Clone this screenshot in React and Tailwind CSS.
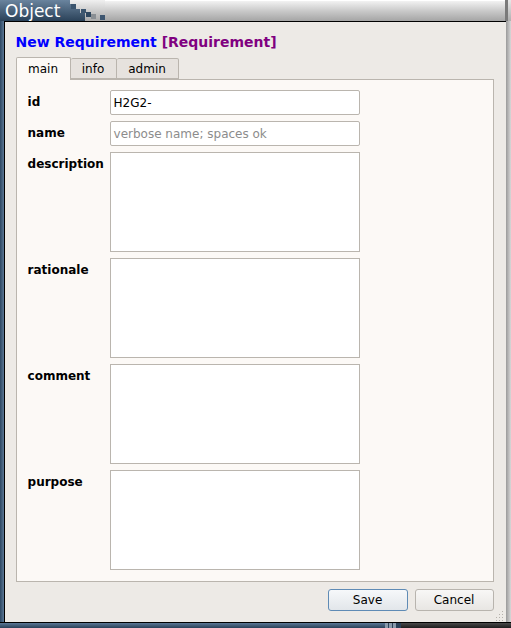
import React from "react";

const fields = [
  { key: "id", label: "id", value: "H2G2-", tall: false },
  { key: "name", label: "name", placeholder: "verbose name; spaces ok", tall: false },
  { key: "description", label: "description", tall: true },
  { key: "rationale", label: "rationale", tall: true },
  { key: "comment", label: "comment", tall: true },
  { key: "purpose", label: "purpose", tall: true },
];

const TitleSteps = () => (
  <svg width="40" height="21" viewBox="0 0 40 21" className="shrink-0">
    <defs>
      <linearGradient id="blu" x1="0" y1="0" x2="0" y2="1">
        <stop offset="0" stopColor="#6a849e" />
        <stop offset="1" stopColor="#2b4259" />
      </linearGradient>
      <linearGradient id="gry" x1="0" y1="0" x2="0" y2="1">
        <stop offset="0" stopColor="#f0f0f0" />
        <stop offset="1" stopColor="#a9a9a9" />
      </linearGradient>
    </defs>
    <rect width="40" height="21" fill="url(#gry)" />
    <polygon points="0,0 5,0 5,4 10,4 10,9 15,9 15,13 20,13 20,21 0,21" fill="url(#blu)" />
    <rect x="6" y="4" width="5" height="5" fill="#3c556e" />
    <rect x="16" y="9" width="5" height="4" fill="#3c556e" />
    <rect x="21" y="12" width="5" height="5" fill="#2f475f" />
    <rect x="26" y="14" width="5" height="5" fill="#8a8f94" />
    <rect x="35" y="15" width="5" height="5" fill="#3e5670" />
  </svg>
);

export default function App() {
  return (
    <div className="w-[511px] h-[628px] flex flex-col bg-[#c8c8c8] font-['DejaVu_Sans',sans-serif] overflow-hidden">
      {/* title bar */}
      <div className="h-[21px] flex shrink-0">
        <div className="w-[65px] bg-gradient-to-b from-[#6a849e] to-[#2b4259] text-white text-[17px] leading-[23px] pl-[5px] overflow-hidden">
          Object
        </div>
        <TitleSteps />
        <div className="flex-1 bg-gradient-to-b from-[#f2f2f2] via-[#c9c9c9] to-[#a5a5a5] border-t border-white" />
        <div className="w-[3px] bg-[#7a7a7a]" />
        <div className="w-[3px] bg-gradient-to-b from-[#e8e8e8] to-[#b0b0b0]" />
      </div>

      {/* body */}
      <div className="flex flex-1 min-h-0">
        <div className="w-[4px] bg-gradient-to-r from-[#2e4863] to-[#5b7896]" />
        <div className="w-px bg-black" />
        <div className="flex-1 flex flex-col bg-[#edeae6] border-t border-black">
          <div className="pl-[11px] pr-[12px] pt-[11px] flex flex-col">
            <div className="text-[14px] font-bold leading-[18px]">
              <span className="text-[#0000ff]">New Requirement </span>
              <span className="text-[#800080]">[Requirement]</span>
            </div>

            {/* tabs */}
            <div className="flex items-end mt-[5px] h-[23px] text-[12px] text-black">
              <div className="h-[23px] w-[55px] bg-[#fcf9f6] border border-b-0 border-[#bab5ae] rounded-t-[2px] flex items-center justify-center relative z-10 -mb-px">
                main
              </div>
              <div className="h-[21px] w-[46px] bg-[#e6e2de] border border-l-0 border-[#bab5ae] rounded-t-[2px] flex items-center justify-center">
                info
              </div>
              <div className="h-[21px] w-[62px] bg-[#e6e2de] border border-l-0 border-[#bab5ae] rounded-t-[2px] flex items-center justify-center">
                admin
              </div>
            </div>

            {/* panel */}
            <div className="h-[503px] w-[478px] bg-[#fcf9f6] border border-[#bab5ae] pt-[10px] pl-[11px] flex flex-col gap-[6px]">
              {fields.map((f) => (
                <div key={f.key} className="flex items-start">
                  <div className="w-[82px] text-[12px] font-bold text-black pt-[4px] leading-[16px]">{f.label}</div>
                  <div
                    className={
                      "w-[250px] bg-white border border-[#bab5ae] text-[12px] leading-[16px] px-[3px] pt-[4px] " +
                      (f.tall ? "h-[100px]" : "h-[25px] rounded-[2px]")
                    }
                  >
                    {f.value && <span className="text-black">{f.value}</span>}
                    {f.placeholder && <span className="text-[#8c8c8c]">{f.placeholder}</span>}
                  </div>
                </div>
              ))}
            </div>

            {/* buttons */}
            <div className="flex justify-end gap-[7px] mt-[7px] text-[12px] text-black">
              <button className="w-[80px] h-[22px] rounded-[3px] border border-[#5f8bb5] bg-gradient-to-b from-[#f6f8fa] to-[#e2e6ea] leading-[20px]">
                Save
              </button>
              <button className="w-[79px] h-[22px] rounded-[3px] border border-[#b8b4ae] bg-gradient-to-b from-[#f8f7f6] to-[#e8e6e3] leading-[20px]">
                Cancel
              </button>
            </div>
          </div>
          <div className="flex-1 flex justify-end items-end pr-[2px] pb-[1px]">
            <svg width="10" height="10" viewBox="0 0 10 10">
              <g fill="#b5b1ab">
                <rect x="8" y="0" width="1" height="1" />
                <rect x="5" y="3" width="1" height="1" />
                <rect x="8" y="3" width="1" height="1" />
                <rect x="2" y="6" width="1" height="1" />
                <rect x="5" y="6" width="1" height="1" />
                <rect x="8" y="6" width="1" height="1" />
                <rect x="2" y="9" width="1" height="1" />
                <rect x="5" y="9" width="1" height="1" />
                <rect x="8" y="9" width="1" height="1" />
              </g>
            </svg>
          </div>
        </div>
        <div className="w-px bg-black" />
        <div className="w-[5px] bg-gradient-to-r from-[#9a9a9a] to-[#d8d8d8]" />
      </div>

      {/* bottom frame */}
      <div className="h-px bg-black shrink-0" />
      <div className="h-[5px] flex shrink-0">
        <div className="w-[385px] bg-gradient-to-b from-[#5b7896] to-[#2a4158]" />
        <div className="w-[16px] flex gap-px bg-[#2a4158]">
          <div className="w-[3px] bg-[#8a9aab]" />
          <div className="w-[3px] bg-[#8a9aab]" />
          <div className="w-[3px] bg-[#8a9aab]" />
        </div>
        <div className="flex-1 bg-gradient-to-b from-[#4a4a4a] to-[#1e1e1e]" />
      </div>
    </div>
  );
}
